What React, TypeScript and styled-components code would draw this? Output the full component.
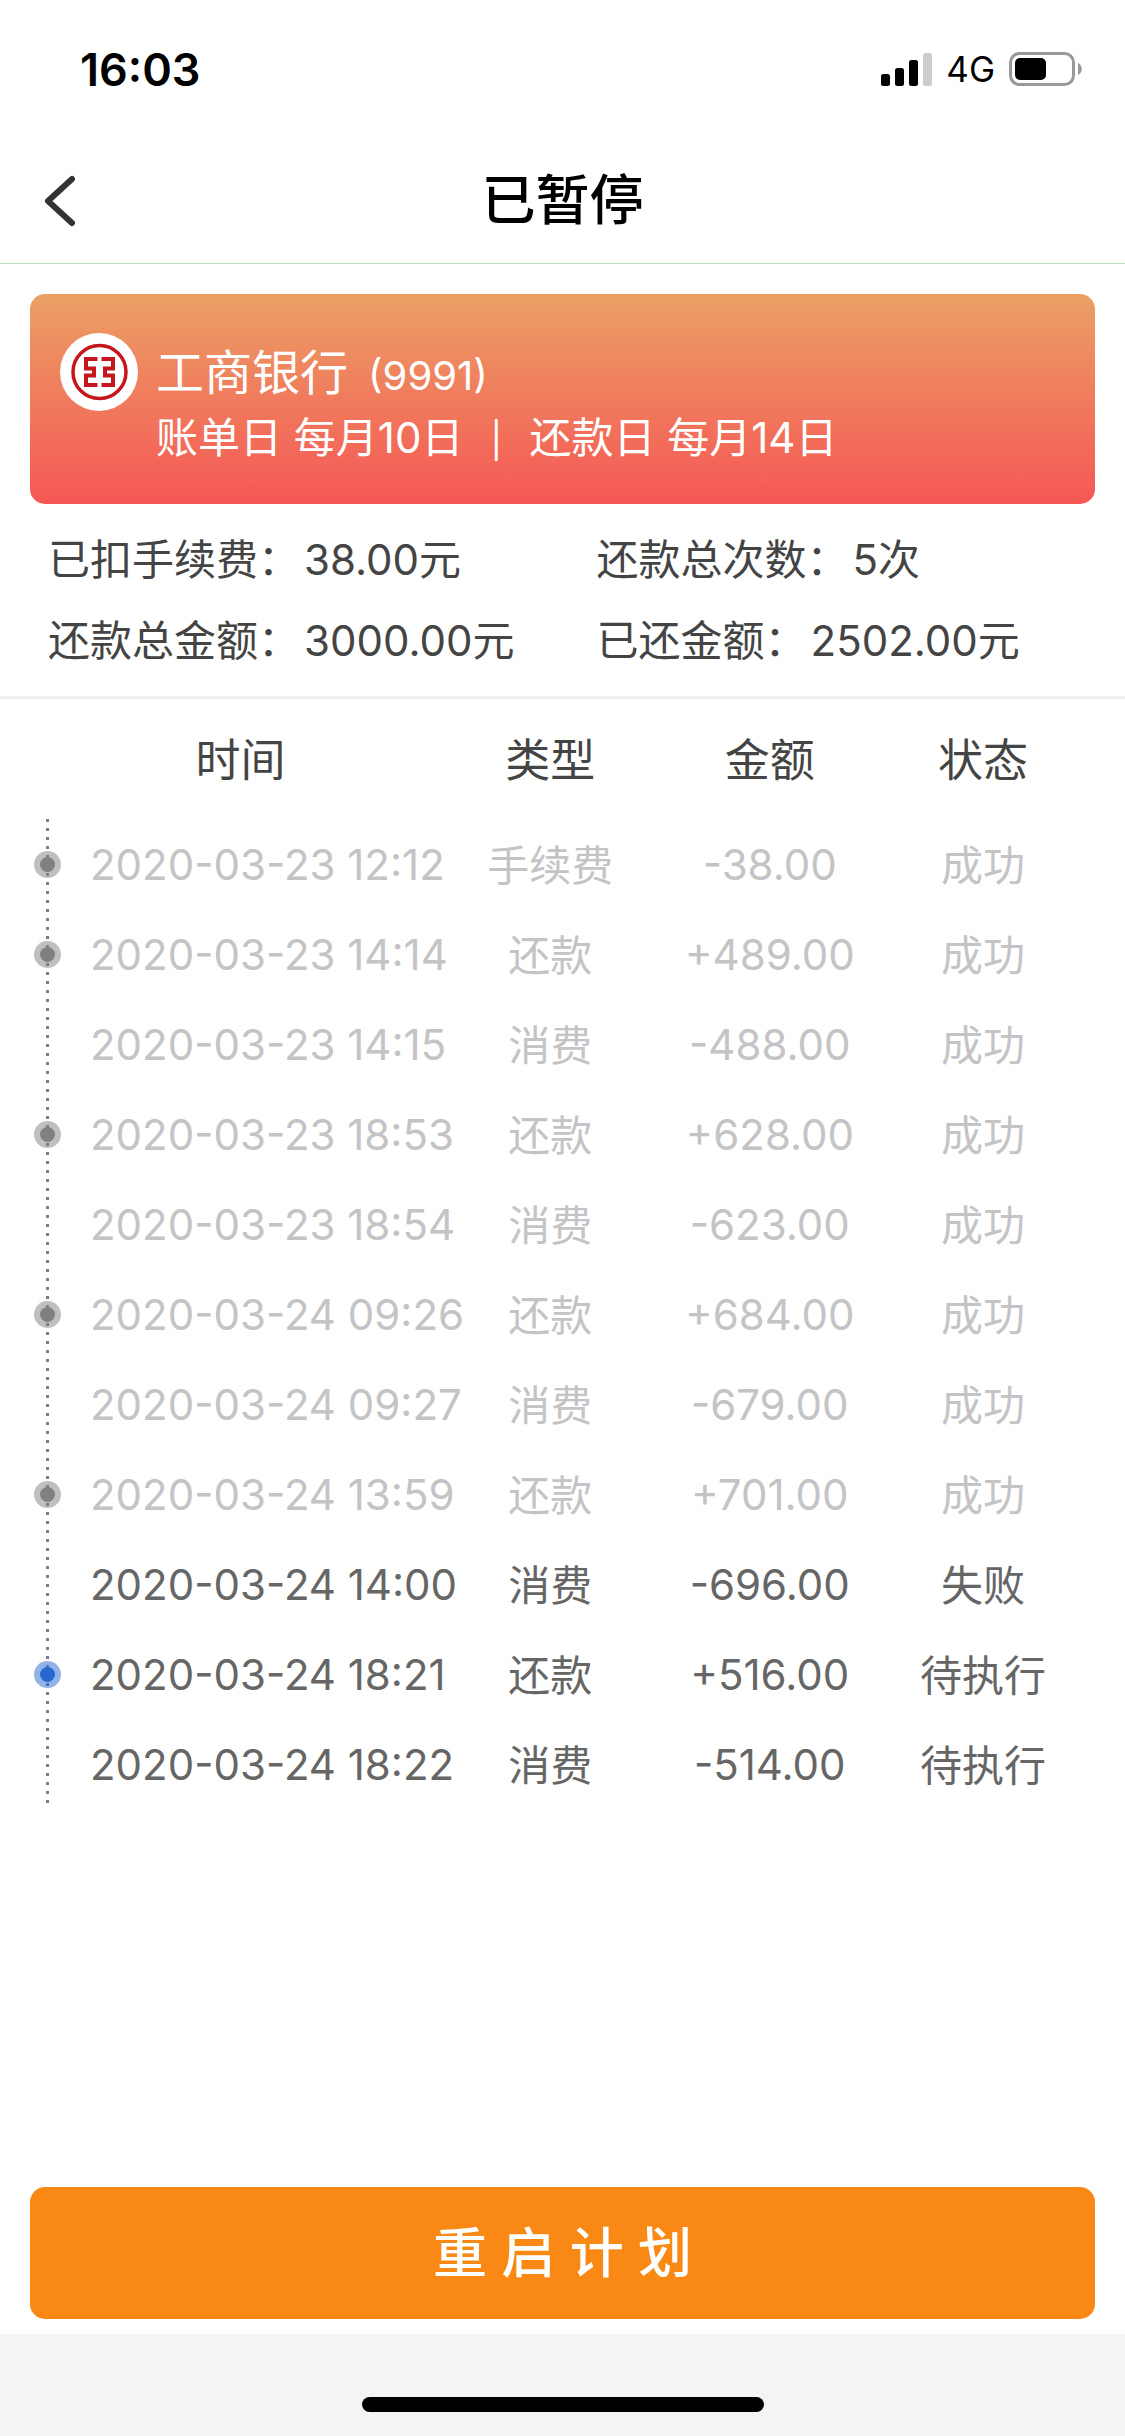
import React from 'react';
import styled, { createGlobalStyle } from 'styled-components';

const GlobalStyle = createGlobalStyle`
  * { box-sizing: border-box; }
  body { margin: 0; background: #fff; }
  body, button, table {
    font-family: Inter, 'Noto Sans CJK SC', sans-serif;
  }
`;

const Page = styled.div`
  display: flex;
  flex-direction: column;
  min-height: 100vh;
  color: #444;
  font-size: 42px;
`;

const StatusBar = styled.div`
  display: flex;
  align-items: center;
  justify-content: space-between;
  height: 138px;
  padding: 0 42px 0 80px;
  color: #000;
`;

const Clock = styled.time`
  font-size: 45px;
  font-weight: 600;
`;

const Indicators = styled.div`
  display: flex;
  align-items: center;
  gap: 14px;
  font-size: 35px;
`;

const NavBar = styled.header`
  display: grid;
  grid-template-columns: 120px 1fr 120px;
  align-items: center;
  height: 126px;
  border-bottom: 1px solid #b8dcbc;
`;

const BackButton = styled.button`
  display: flex;
  align-items: center;
  height: 100%;
  padding: 0 0 0 42px;
  border: 0;
  background: none;
  color: #333;
`;

const Title = styled.h1`
  margin: 0;
  padding-bottom: 8px;
  color: #000;
  font-size: 54px;
  font-weight: 500;
  text-align: center;
`;

const Card = styled.section`
  display: flex;
  gap: 18px;
  height: 210px;
  margin: 30px 30px 0;
  padding: 39px 30px 0;
  border-radius: 15px;
  background: linear-gradient(#eba065, #f55755);
  color: #fff;
`;

const BankName = styled.h2`
  margin: 0;
  font-size: 48px;
  font-weight: 400;
  line-height: 80px;
`;

const CardTail = styled.span`
  margin-left: 20px;
  font-size: 40px;
`;

const BillDays = styled.p`
  margin: 0;
  font-size: 42px;
  line-height: 44px;
  white-space: nowrap;
`;

const Separator = styled.span`
  display: inline-block;
  width: 66px;
  font-size: 35px;
  text-align: center;
`;

const Summary = styled.section`
  display: grid;
  grid-template-columns: 1fr 1fr;
  column-gap: 20px;
  padding: 15px 0 15px 48px;
  border-bottom: 3px solid #eee;
  line-height: 81px;
  white-space: nowrap;
`;

const SummaryValue = styled.span`
  margin-left: 4px;
`;

const Records = styled.table`
  width: 100%;
  table-layout: fixed;
  border-collapse: collapse;
  white-space: nowrap;
`;

const Column = styled.col<{ $width?: string }>`
  width: ${({ $width }) => $width ?? 'auto'};
`;

const HeadCell = styled.th`
  height: 120px;
  padding: 0 0 4px;
  font-size: 45px;
  font-weight: 400;
  &:first-child { padding-left: 4px; }
  &:last-child { padding-right: 75px; }
`;

const Row = styled.tr<{ $done: boolean }>`
  height: 90px;
  color: ${({ $done }) => ($done ? '#c4c4c7' : '#666')};
`;

const Cell = styled.td`
  padding: 0;
  text-align: center;
`;

const LabelCell = styled(Cell)`
  padding-bottom: 4px;
  &:last-child { padding-right: 75px; }
`;

const TimeCell = styled(Cell)`
  text-align: left;
`;

const TrackCell = styled(Cell)`
  padding-left: 40px;
  background: linear-gradient(#7b7b9f 3px, transparent 3px) 46px 0 / 3px 9px repeat-y;
`;

const Marker = styled.span<{ $done: boolean }>`
  display: block;
  width: 15px;
  height: 15px;
  border-radius: 50%;
  background: ${({ $done }) => ($done ? '#808080' : '#2868d0')};
  box-shadow: 0 0 0 6px ${({ $done }) => ($done ? 'rgba(128, 128, 128, 0.5)' : 'rgba(40, 104, 208, 0.5)')};
`;

const Footer = styled.footer`
  margin-top: auto;
  padding: 0 30px 15px;
`;

const RestartButton = styled.button`
  display: block;
  width: 100%;
  height: 132px;
  padding: 0 0 8px;
  border: 0;
  border-radius: 15px;
  background: #f98815;
  color: #fff;
  font-size: 54px;
  font-weight: 500;
`;

const HomeArea = styled.div`
  display: flex;
  justify-content: center;
  height: 102px;
  padding-top: 63px;
  background: #f4f4f4;
`;

const HomeIndicator = styled.div`
  width: 402px;
  height: 15px;
  border-radius: 8px;
  background: #000;
`;

type Entry = { time: string; type: string; amount: string; status: string };

const summary = [
  { label: '已扣手续费', value: '38.00元' },
  { label: '还款总次数', value: '5次' },
  { label: '还款总金额', value: '3000.00元' },
  { label: '已还金额', value: '2502.00元' },
];

const entries: Entry[] = [
  { time: '2020-03-23 12:12', type: '手续费', amount: '-38.00', status: '成功' },
  { time: '2020-03-23 14:14', type: '还款', amount: '+489.00', status: '成功' },
  { time: '2020-03-23 14:15', type: '消费', amount: '-488.00', status: '成功' },
  { time: '2020-03-23 18:53', type: '还款', amount: '+628.00', status: '成功' },
  { time: '2020-03-23 18:54', type: '消费', amount: '-623.00', status: '成功' },
  { time: '2020-03-24 09:26', type: '还款', amount: '+684.00', status: '成功' },
  { time: '2020-03-24 09:27', type: '消费', amount: '-679.00', status: '成功' },
  { time: '2020-03-24 13:59', type: '还款', amount: '+701.00', status: '成功' },
  { time: '2020-03-24 14:00', type: '消费', amount: '-696.00', status: '失败' },
  { time: '2020-03-24 18:21', type: '还款', amount: '+516.00', status: '待执行' },
  { time: '2020-03-24 18:22', type: '消费', amount: '-514.00', status: '待执行' },
];

const SignalIcon = () => (
  <svg width="51" height="33" viewBox="0 0 51 33" aria-hidden="true">
    <rect x="0" y="21" width="9" height="12" rx="2.5" />
    <rect x="14" y="15" width="9" height="18" rx="2.5" />
    <rect x="28" y="7" width="9" height="26" rx="2.5" />
    <rect x="42" y="0" width="9" height="33" rx="2.5" fill="#ccc" />
  </svg>
);

const BatteryIcon = () => (
  <svg width="74" height="34" viewBox="0 0 74 34" aria-hidden="true">
    <rect x="1.5" y="1.5" width="63" height="31" rx="9" fill="none" stroke="#999" strokeWidth="3" />
    <rect x="6" y="6" width="31" height="22" rx="5" />
    <path d="M69 11c5 2 5 10 0 12z" fill="#999" />
  </svg>
);

const BackIcon = () => (
  <svg width="36" height="54" viewBox="0 0 36 54" fill="none" stroke="currentColor" strokeWidth="6" strokeLinecap="round" strokeLinejoin="round" aria-hidden="true">
    <path d="M30 5 6 27l24 22" />
  </svg>
);

const BankLogo = () => (
  <svg width="78" height="78" viewBox="0 0 78 78" fill="none" stroke="#c4161c" aria-hidden="true">
    <circle cx="39" cy="39" r="39" fill="#fff" stroke="none" />
    <circle cx="39.5" cy="39" r="26.5" strokeWidth="3.5" />
    <path d="M37.5 26H26v9.5h8v7h-8V52h11.5M41.5 26H53v9.5h-8v7h8V52H41.5" strokeWidth="4" />
  </svg>
);

export default function App() {
  return (
    <>
      <GlobalStyle />
      <Page>
        <StatusBar>
          <Clock>16:03</Clock>
          <Indicators>
            <SignalIcon />
            <span>4G</span>
            <BatteryIcon />
          </Indicators>
        </StatusBar>
        <NavBar>
          <BackButton type="button" aria-label="返回">
            <BackIcon />
          </BackButton>
          <Title>已暂停</Title>
        </NavBar>
        <main>
          <Card>
            <BankLogo />
            <div>
              <BankName>
                工商银行<CardTail>(9991)</CardTail>
              </BankName>
              <BillDays>
                账单日 每月10日<Separator>|</Separator>还款日 每月14日
              </BillDays>
            </div>
          </Card>
          <Summary>
            {summary.map(({ label, value }) => (
              <div key={label}>
                {label}：<SummaryValue>{value}</SummaryValue>
              </div>
            ))}
          </Summary>
          <Records>
            <colgroup>
              <Column $width="90px" />
              <Column />
              <Column $width="13%" />
              <Column $width="26%" />
              <Column $width="209px" />
            </colgroup>
            <thead>
              <tr>
                <HeadCell colSpan={2}>时间</HeadCell>
                <HeadCell>类型</HeadCell>
                <HeadCell>金额</HeadCell>
                <HeadCell>状态</HeadCell>
              </tr>
            </thead>
            <tbody>
              {entries.map((entry) => {
                const done = entry.status === '成功';
                return (
                  <Row key={entry.time} $done={done}>
                    <TrackCell>{entry.type !== '消费' && <Marker $done={done} />}</TrackCell>
                    <TimeCell>{entry.time}</TimeCell>
                    <LabelCell>{entry.type}</LabelCell>
                    <Cell>{entry.amount}</Cell>
                    <LabelCell>{entry.status}</LabelCell>
                  </Row>
                );
              })}
            </tbody>
          </Records>
        </main>
        <Footer>
          <RestartButton type="button">重 启 计 划</RestartButton>
        </Footer>
        <HomeArea>
          <HomeIndicator />
        </HomeArea>
      </Page>
    </>
  );
}
